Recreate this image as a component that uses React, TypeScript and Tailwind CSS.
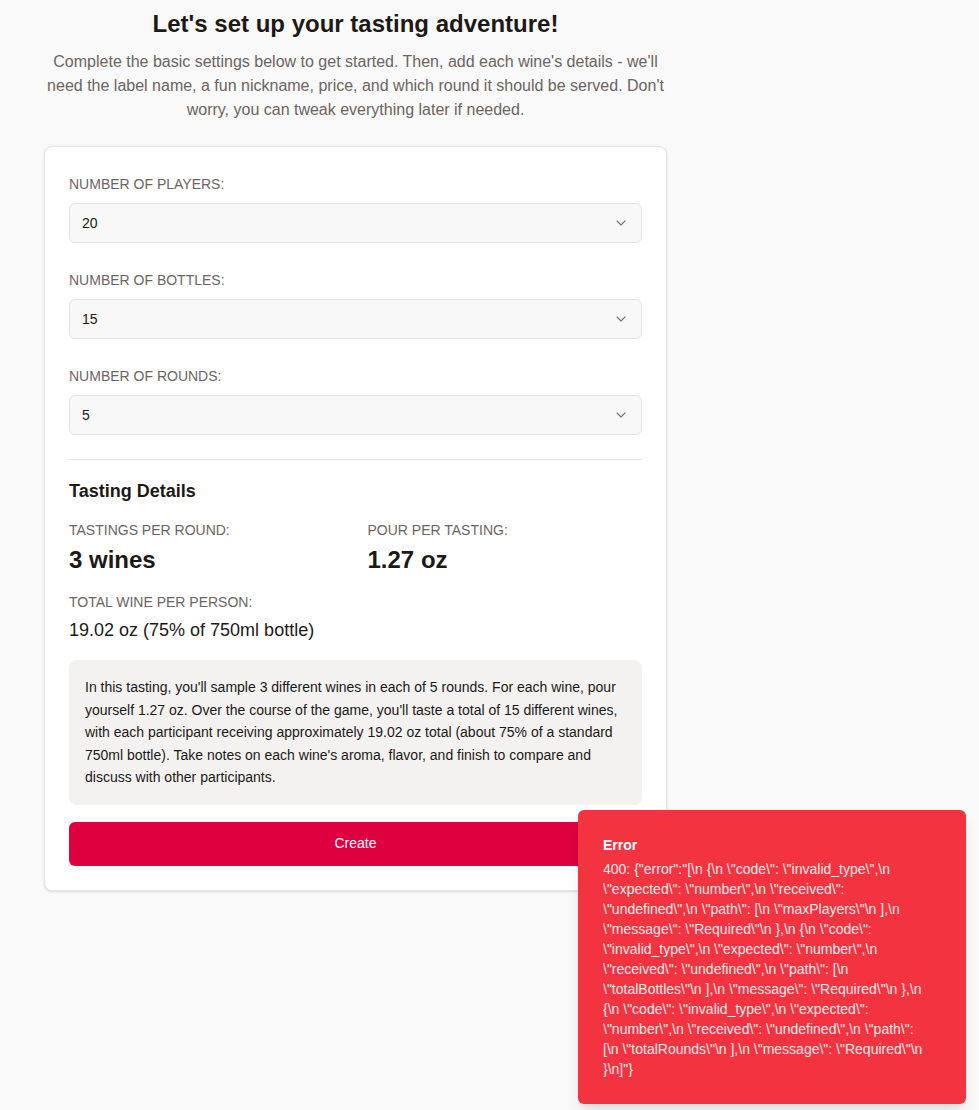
import React from "react";

const errText = String.raw`400: {"error":"[\n {\n \"code\": \"invalid_type\",\n \"expected\": \"number\",\n \"received\": \"undefined\",\n \"path\": [\n \"maxPlayers\"\n ],\n \"message\": \"Required\"\n },\n {\n \"code\": \"invalid_type\",\n \"expected\": \"number\",\n \"received\": \"undefined\",\n \"path\": [\n \"totalBottles\"\n ],\n \"message\": \"Required\"\n },\n {\n \"code\": \"invalid_type\",\n \"expected\": \"number\",\n \"received\": \"undefined\",\n \"path\": [\n \"totalRounds\"\n ],\n \"message\": \"Required\"\n }\n]"}`;

function Chevron() {
  return (
    <svg width="16" height="16" viewBox="0 0 24 24" fill="none" stroke="#78716c" strokeWidth="1.6" strokeLinecap="round" strokeLinejoin="round">
      <path d="m6 9 6 6 6-6" />
    </svg>
  );
}

function Field({ label, value }: { label: string; value: string }) {
  return (
    <div className="flex flex-col">
      <div className="text-[14px] leading-[20px] text-[#6b6461] uppercase">{label}</div>
      <div className="mt-[9px] h-[40px] rounded-md border border-[#e7e5e4] bg-[#f8f8f8] flex items-center justify-between pl-[12px] pr-[12px]">
        <span className="text-[14px] text-[#1c1917]">{value}</span>
        <Chevron />
      </div>
    </div>
  );
}

export default function App() {
  return (
    <div
      className="relative min-h-[1110px] bg-[#f9f9f9] text-[#1c1917]"
      style={{ fontFamily: '"Liberation Sans", Arial, Helvetica, sans-serif' }}
    >
      <div className="ml-[44px] w-[623px] pt-[9px]">
        <h1 className="text-center text-[24px] leading-[30px] font-bold text-[#1c1917]">
          Let's set up your tasting adventure!
        </h1>
        <p className="mt-[11px] text-center text-[16px] leading-[24px] text-[#6b6461]">
          Complete the basic settings below to get started. Then, add each wine's details - we'll need the label name, a fun nickname, price, and which round it should be served. Don't worry, you can tweak everything later if needed.
        </p>
        <div className="mt-[24px] rounded-lg border border-[#e7e5e4] bg-white shadow-sm px-[24px] pt-[27px] pb-[24px]">
          <div className="flex flex-col gap-[27px]">
            <Field label="Number of players:" value="20" />
            <Field label="Number of bottles:" value="15" />
            <Field label="Number of rounds:" value="5" />
          </div>
          <div className="mt-[24px] border-t border-[#e7e5e4]" />
          <h2 className="mt-[19px] text-[18px] leading-[24px] font-bold text-[#1c1917]">Tasting Details</h2>
          <div className="mt-[17px] grid grid-cols-2 gap-x-[24px]">
            <div>
              <div className="text-[14px] leading-[20px] text-[#6b6461] uppercase">Tastings per round:</div>
              <div className="mt-[4px] text-[24px] leading-[32px] font-bold">3 wines</div>
            </div>
            <div>
              <div className="text-[14px] leading-[20px] text-[#6b6461] uppercase">Pour per tasting:</div>
              <div className="mt-[4px] text-[24px] leading-[32px] font-bold">1.27 oz</div>
            </div>
          </div>
          <div className="mt-[16px] text-[14px] leading-[20px] text-[#6b6461] uppercase">Total wine per person:</div>
          <div className="mt-[4px] text-[18px] leading-[28px]">19.02 oz (75% of 750ml bottle)</div>
          <div className="mt-[16px] rounded-lg bg-[#f3f2f1] px-[16px] py-[16px] text-[14px] leading-[22.5px] text-[#1c1917]">
            In this tasting, you'll sample 3 different wines in each of 5 rounds. For each wine, pour yourself 1.27 oz. Over the course of the game, you'll taste a total of 15 different wines, with each participant receiving approximately 19.02 oz total (about 75% of a standard 750ml bottle). Take notes on each wine's aroma, flavor, and finish to compare and discuss with other participants.
          </div>
          <button className="mt-[17px] w-full h-[44px] rounded-md bg-[#df0040] text-white text-[14px]">
            Create
          </button>
        </div>
      </div>

      <div className="absolute left-[578px] top-[810px] w-[388px] rounded-md bg-[#f3333f] text-white shadow-lg pl-[25px] pr-[36px] pt-[25px] pb-[25px]">
        <div className="text-[14px] leading-[20px] font-semibold">Error</div>
        <div className="mt-[4px] text-[14px] leading-[20px] opacity-90 break-words">{errText}</div>
      </div>
    </div>
  );
}
